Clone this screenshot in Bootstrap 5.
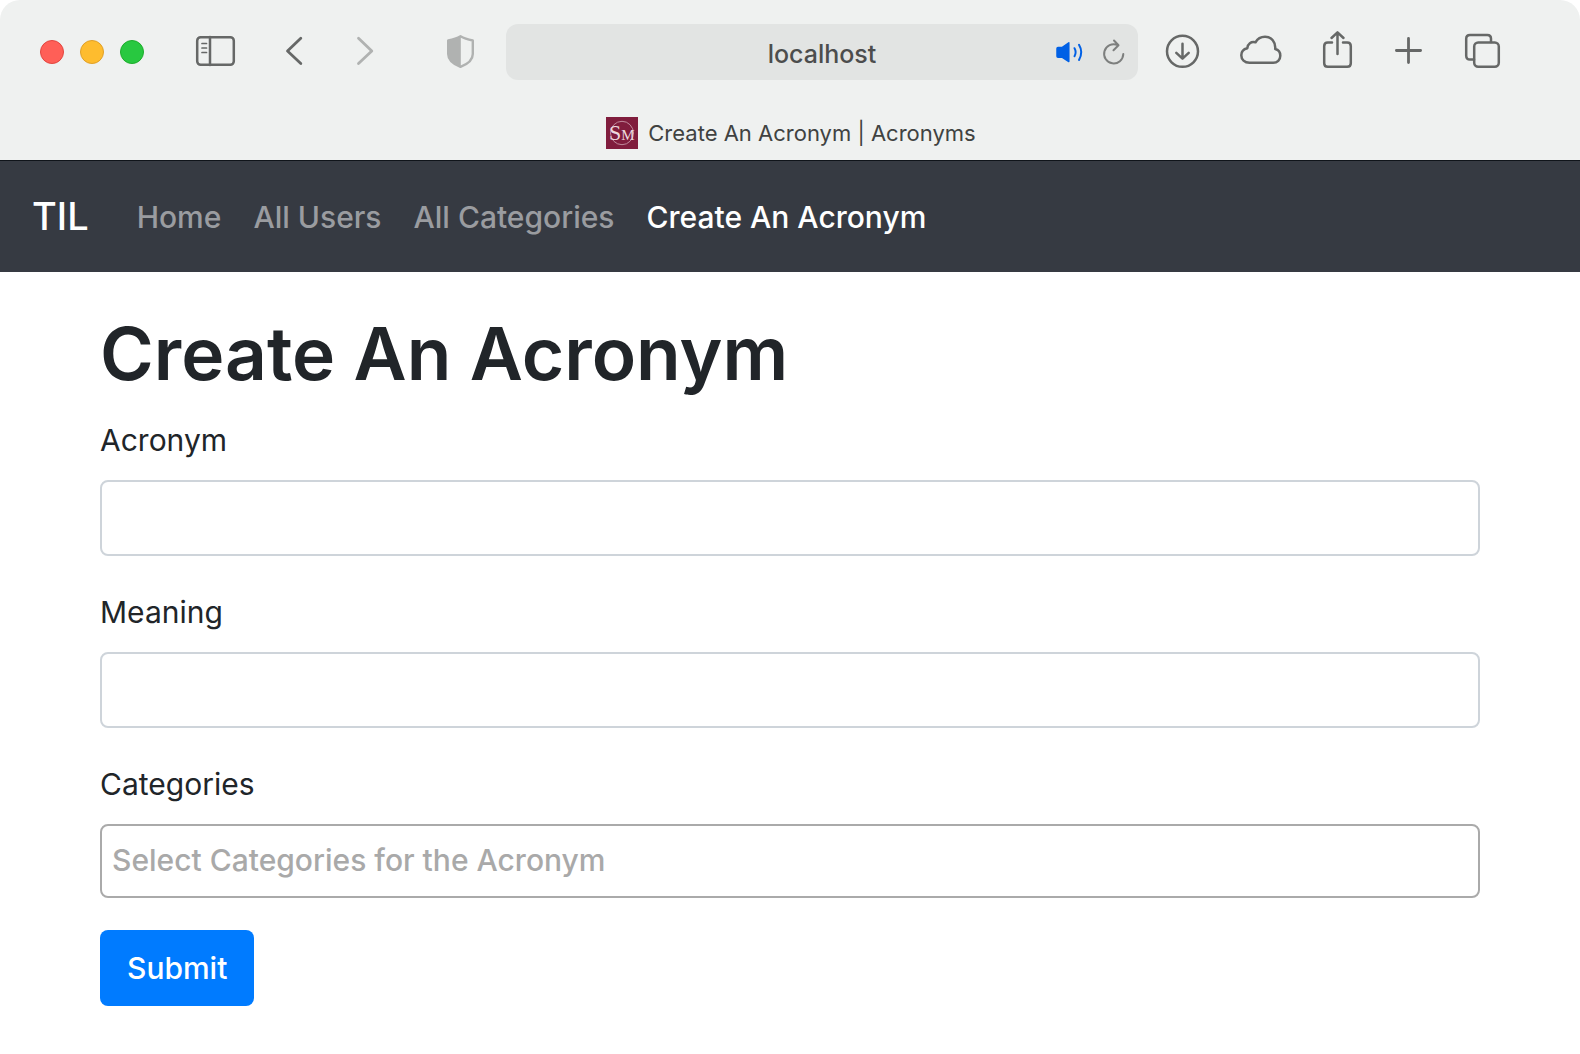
<!DOCTYPE html>
<html lang="en">
<head>
<meta charset="utf-8">
<meta name="viewport" content="width=device-width, initial-scale=1">
<title>Create An Acronym | Acronyms</title>
<link href="https://cdn.jsdelivr.net/npm/bootstrap@5.3.0/dist/css/bootstrap.min.css" rel="stylesheet">
<style>
  body { font-family: Inter, "Liberation Sans", sans-serif; font-size: 30px; line-height: 48px; color: #212529; background: #fff; }
  svg { display: block; overflow: visible; flex: none; fill: none; stroke: #666867; stroke-width: 2.5; stroke-linecap: round; stroke-linejoin: round; }
  .chrome { background: #eff1f0; border-radius: 20px 20px 0 0; height: 160px; }
  .toolbar { height: 104px; padding: 0 79px 0 40px; }
  .tool { border: 0; padding: 0; background: none; }
  .light { width: 24px; height: 24px; border-radius: 50%; border: 1px solid; padding: 0; }
  .light-close { background: #ff5f57; border-color: #e2463f; }
  .light-min { background: #febc2e; border-color: #e0a028; }
  .light-max { background: #28c840; border-color: #1dad2b; }
  .lights { gap: 16px; margin-right: 52px; }
  .history { gap: 55px; margin: 0 74px 0 51px; }
  .faded { stroke: #b0b2b1; }
  .actions { gap: 42px; }
  .address { margin: 0 27px 0 32px; }
  .address input { height: 56px; border: 0; border-radius: 12px; background: #e2e4e3; color: #4c4d4d; font-size: 25px; font-weight: 500; text-align: center; padding: 4px 80px 0; }
  .address-tools { gap: 20px; right: 13px; top: 8px; }
  .tab-strip { height: 56px; gap: 10px; padding: 2px 0 0 2px; font-size: 22px; color: #404241; }
  .site-nav { background: #363a42; border-top: 1px solid #10141a; height: 112px; padding: 0 32px; }
  .site-nav .navbar-brand { font-size: 38px; font-weight: 500; line-height: 60px; padding: 0 0 2px; margin-right: 32px; color: #fff; }
  .site-nav .navbar-nav .nav-link { padding: 16px; color: #9a9ca0; font-weight: 500; }
  .site-nav .navbar-nav .nav-link.active { color: #fff; }
  .page { padding: 32px 100px 48px; }
  .page h1 { font-size: 73px; line-height: 100px; font-weight: 600; margin-bottom: 12px; }
  .page .form-label { display: block; margin-bottom: 16px; }
  .field { margin-bottom: 32px; }
  .field .form-control { height: 76px; border: 2px solid #ced4da; border-radius: 8px; font-size: 30px; }
  .field .form-control.picker { height: 74px; border-color: #aaa; padding: 0 10px 2px; font-weight: 500; }
  .picker::placeholder { color: #a9a9a9; opacity: 1; }
  .btn-submit { background: #007bff; color: #fff; font-size: 30px; font-weight: 500; line-height: 48px; padding: 14px 27px; border: 0; border-radius: 8px; }
</style>
</head>
<body>
<header class="chrome">
  <div class="toolbar d-flex align-items-center">
    <div class="lights d-flex">
      <button class="light light-close" aria-label="Close"></button>
      <button class="light light-min" aria-label="Minimise"></button>
      <button class="light light-max" aria-label="Zoom"></button>
    </div>
    <button class="tool" aria-label="Sidebar">
      <svg width="39" height="40" viewBox="0 0 39 40"><rect x="1.2" y="5.2" width="36.6" height="27.6" rx="3.5"/><path d="M14 5V33"/><path stroke-width="1.7" d="M6 11.5h4.500M6 16h4.500M6 20.500h4.500"/></svg>
    </button>
    <div class="history d-flex">
      <button class="tool" aria-label="Back"><svg width="16" height="40" viewBox="0 0 16 40"><path stroke-width="2.8" d="M14.800 6.200L1.500 19L14.800 31.500"/></svg></button>
      <button class="tool" aria-label="Forward"><svg class="faded" width="16" height="40" viewBox="0 0 16 40"><path stroke-width="2.8" d="M1.500 6.200L14.800 19L1.500 31.500"/></svg></button>
    </div>
    <button class="tool" aria-label="Privacy report">
      <svg class="faded" width="27" height="40" viewBox="0 0 27 40"><path stroke-width="2.400" d="M13.500 4.200C17 6.300 21 7.500 25.800 8.500V22C25.800 28 21 32 13.500 34.800C6 32 1.200 28 1.200 22V8.500C6 7.500 10 6.300 13.500 4.200Z"/><path fill="#b0b2b1" stroke="none" d="M13.800 4C10 6.300 6 7.500 1.200 8.500V22C1.200 28 6 32 13.800 34.800Z"/></svg>
    </button>
    <div class="address flex-grow-1 position-relative">
      <input class="w-100" type="text" value="localhost" aria-label="Address">
      <div class="address-tools position-absolute d-flex">
        <button class="tool" aria-label="Mute tab"><svg width="27" height="40" viewBox="0 0 27 40"><path fill="#0060e5" stroke="#0060e5" stroke-width="1.500" d="M1 16.500Q1 15.500 2 15.500H6L12.800 10.800V29.500L6 25.200H2Q1 25.200 1 24.200Z"/><path stroke="#0060e5" stroke-width="2" d="M18.500 16.200Q20.800 20.200 18.500 24.200M23 12.800Q27.500 20.200 23 28"/></svg></button>
        <button class="tool" aria-label="Reload"><svg width="22" height="40" viewBox="0 0 22 40"><path stroke="#7d7f7e" stroke-width="2" d="M20.300 22A9.600 9.600 0 1 1 14.500 13M11 8.500L15.500 13.300L10.500 18.200"/></svg></button>
      </div>
    </div>
    <div class="actions d-flex">
      <button class="tool" aria-label="Downloads"><svg width="34" height="40" viewBox="0 0 34 40"><circle cx="17.500" cy="19.300" r="15.500"/><path d="M17.500 11.800V26.500M11.300 20.800L17.500 26.700L23.700 20.800"/></svg></button>
      <button class="tool" aria-label="iCloud tabs"><svg width="40" height="40" viewBox="0 0 40 40"><path d="M8.500 30.800C3.500 30.800 .3 27.500 .3 23.300C.3 19.800 2.800 17 6.300 16.200C6.500 12 10.200 9 14.500 10.300C16.500 6.700 19.800 4.800 24 4.800C30.500 4.800 34.800 9.800 34.200 17C37.300 17.700 39.300 20.300 39.300 23.700C39.300 27.800 36.200 30.800 32.300 30.800Z"/></svg></button>
      <button class="tool" aria-label="Share"><svg width="30" height="40" viewBox="0 0 30 40"><path d="M9 10.600H4.800Q1.200 10.600 1.200 14.200V31.200Q1.200 34.800 4.800 34.800H24.200Q27.800 34.800 27.800 31.200V14.200Q27.800 10.600 24.200 10.600H20M14.500 22V.5M8.500 6L14.500 .3L20.500 6"/></svg></button>
      <button class="tool" aria-label="New tab"><svg width="28" height="40" viewBox="0 0 28 40"><path stroke-width="2.800" d="M1.400 18.500H25.600M13.500 6.400V30.600"/></svg></button>
      <button class="tool" aria-label="Tab overview"><svg width="36" height="40" viewBox="0 0 36 40"><rect x="9.200" y="10.500" width="24.600" height="24.300" rx="4"/><path d="M9 27.500H5Q1.200 27.500 1.200 23.700V6.800Q1.200 3 5 3H22.300Q26 3 26 6.800V10"/></svg></button>
    </div>
  </div>
  <div class="tab-strip d-flex justify-content-center align-items-center">
    <svg width="32" height="32" viewBox="0 0 32 32" aria-hidden="true"><rect width="32" height="32" fill="#801d3d" stroke="none"/><ellipse cx="16" cy="16" rx="11.500" ry="11.700" stroke="#c08a9c" stroke-width="1"/><text x="3" y="23" fill="#ecd9df" stroke="none" font-family="Liberation Serif, serif" font-size="22">S<tspan font-size="15">M</tspan></text></svg>
    <span>Create An Acronym | Acronyms</span>
  </div>
</header>

<nav class="site-nav navbar navbar-expand">
  <a class="navbar-brand" href="#">TIL</a>
  <ul class="navbar-nav">
    <li class="nav-item"><a class="nav-link" href="#">Home</a></li>
    <li class="nav-item"><a class="nav-link" href="#">All Users</a></li>
    <li class="nav-item"><a class="nav-link" href="#">All Categories</a></li>
    <li class="nav-item"><a class="nav-link active" aria-current="page" href="#">Create An Acronym</a></li>
  </ul>
</nav>

<main class="page">
  <h1>Create An Acronym</h1>
  <form>
    <div class="field">
      <label class="form-label" for="short">Acronym</label>
      <input class="form-control" type="text" id="short">
    </div>
    <div class="field">
      <label class="form-label" for="long">Meaning</label>
      <input class="form-control" type="text" id="long">
    </div>
    <div class="field">
      <label class="form-label" for="categories">Categories</label>
      <input class="form-control picker" type="text" id="categories" placeholder="Select Categories for the Acronym">
    </div>
    <button class="btn btn-submit" type="submit">Submit</button>
  </form>
</main>
<script src="https://cdn.jsdelivr.net/npm/bootstrap@5.3.0/dist/js/bootstrap.bundle.min.js"></script>
</body>
</html>
